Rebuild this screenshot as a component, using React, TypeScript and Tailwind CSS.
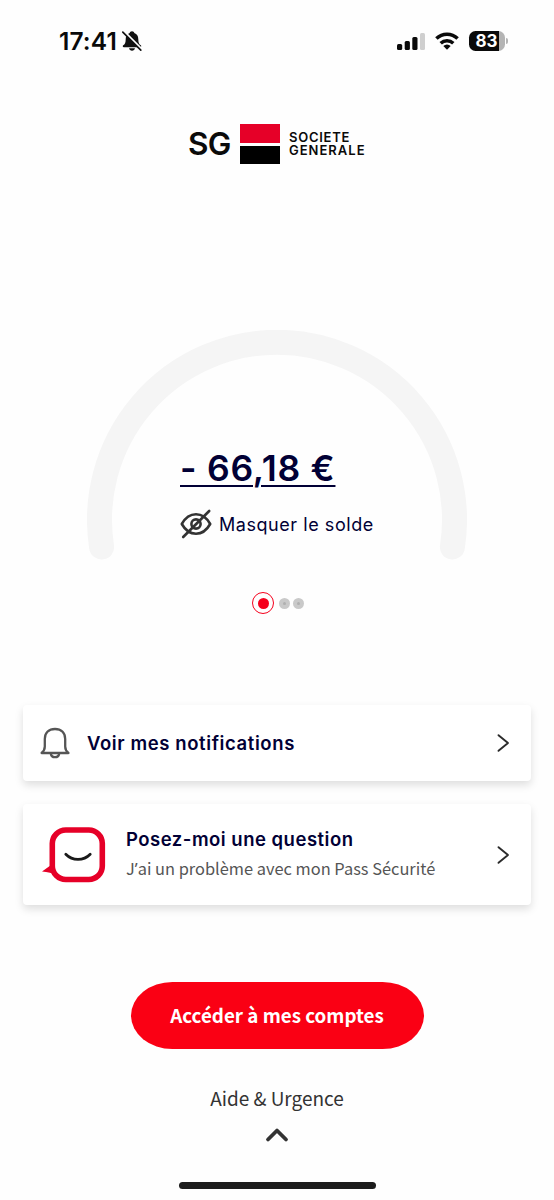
import type { ReactNode } from 'react';

// ── status bar ───────────────────────────────────────────────

function MutedBell() {
  return (
    <svg width="22" height="22" viewBox="0 0 22 22" className="ml-[4px]">
      <path
        d="M11 1.2c-1.3 0-2.1.8-2.3 1.8C6 3.900 4.700 6.200 4.700 9.200c0 3.600-.8 4.900-2.500 6.100-.8.7-.5 1.900.7 1.900h16.200c1.200 0 1.500-1.200.7-1.900-1.700-1.200-2.500-2.500-2.500-6.100 0-3-1.300-5.300-4-6.200-.2-1-1-1.800-2.300-1.800z"
        fill="#111"
      />
      <path d="M8 18.300h6c-.3 1.500-1.500 2.400-3 2.400s-2.700-.9-3-2.400z" fill="#111" />
      <path d="M2.600 1.200 21 19.600" stroke="#fff" strokeWidth="2.400" />
      <path d="M1.800 2.200 19.800 20.200" stroke="#111" strokeWidth="1.700" strokeLinecap="round" />
    </svg>
  );
}

function StatusBar() {
  return (
    <div className="flex h-[82px] items-center pl-[59px] pr-[46px]">
      <span className="text-[24.500px] font-semibold leading-none tracking-[0.100px] text-[#0a0a0a]">
        17:41
      </span>
      <MutedBell />
      <svg width="28" height="20" viewBox="0 0 28 20" className="ml-auto">
        <rect x="0" y="13" width="5.200" height="6" rx="1.500" fill="#0a0a0a" />
        <rect x="7.700" y="10" width="5.200" height="9" rx="1.500" fill="#0a0a0a" />
        <rect x="15.300" y="6" width="5.200" height="13" rx="1.500" fill="#0a0a0a" />
        <rect x="23" y="2" width="5" height="17" rx="1.500" fill="#cfcfcf" />
      </svg>
      <svg width="24" height="18" viewBox="0 0 24 18" className="ml-[10px]">
        <g fill="none" stroke="#0a0a0a" strokeWidth="3.500">
          <path d="M1.400 6.600a15.200 15.200 0 0 1 21.200 0" />
          <path d="M5.700 11.300a9.200 9.200 0 0 1 12.600 0" />
        </g>
        <path d="M12 17.800 8.300 14.100a5.300 5.300 0 0 1 7.400 0z" fill="#0a0a0a" />
      </svg>
      <div className="ml-[10px] flex items-center gap-px">
        <div className="flex h-5 w-9 items-center justify-center rounded-[6.500px] bg-[linear-gradient(90deg,#0a0a0a_82%,#b4b4b4_82%)] pr-[1px] text-[17px] font-bold leading-none text-white">
          83
        </div>
        <div className="h-[6px] w-[2px] rounded-r-full bg-[#b4b4b4]" />
      </div>
    </div>
  );
}

// ── brand ────────────────────────────────────────────────────

function Logo() {
  return (
    <div className="flex h-[42px] items-center pl-[188px] text-[#0a0a0a]">
      <span className="w-[51.500px] text-[31.500px] font-semibold leading-[42px] tracking-[-0.800px]">
        SG
      </span>
      <span className="flex w-[40px] flex-col gap-[3px]">
        <span className="h-[18.500px] bg-[#e60028]" />
        <span className="h-[18.500px] bg-black" />
      </span>
      <span className="ml-[9.500px] flex flex-col text-[13px] font-semibold leading-[13.500px]">
        <span className="tracking-[0.750px]">SOCIETE</span>
        <span className="tracking-[1px]">GENERALE</span>
      </span>
    </div>
  );
}

// ── balance gauge ────────────────────────────────────────────

function HiddenEye() {
  return (
    <svg width="32" height="30" viewBox="0 0 32 30" fill="none" stroke="#333" strokeWidth="2.600">
      <path d="M1.800 15C5.300 8.800 10.300 5.300 16 5.300S26.700 8.800 30.200 15C26.700 21.200 21.700 24.700 16 24.700S5.300 21.200 1.800 15z" strokeLinejoin="round" />
      <circle cx="16" cy="15" r="4.600" />
      <path d="M3.200 28 29.200 2" strokeLinecap="round" />
    </svg>
  );
}

function BalanceGauge() {
  return (
    <div className="mx-auto grid w-[380px]">
      <svg width="380" height="232" viewBox="0 0 380 232" className="col-start-1 row-start-1">
        <path
          d="M14.600 217A177.500 177.500 0 1 1 365.400 217"
          fill="none"
          stroke="#f5f5f5"
          strokeWidth="25"
          strokeLinecap="round"
        />
      </svg>
      <div className="col-start-1 row-start-1 pl-[93px] pt-[117px] text-[#010035]">
        <div className="h-11 whitespace-nowrap text-[35.500px] font-semibold leading-[44px] tracking-[0.750px] underline decoration-2 underline-offset-[4px]">
          - 66,18 €
        </div>
        <button className="mt-[18px] flex items-center gap-[7px] whitespace-nowrap">
          <HiddenEye />
          <span className="pt-[2px] text-[18px] leading-6 tracking-[0.550px]">Masquer le solde</span>
        </button>
      </div>
    </div>
  );
}

function Pager() {
  return (
    <div className="ml-[252px] mt-[30px] flex items-center gap-[3px]">
      <span className="mr-[2px] flex size-[22px] items-center justify-center rounded-full border-[1.500px] border-[#f5001c]">
        <span className="size-[11px] rounded-full bg-[#f5001c]" />
      </span>
      {[2, 3].map((page) => (
        <span key={page} className="flex size-[11px] items-center justify-center rounded-full bg-[#c9c9c9]">
          <span className="size-[3px] rounded-full bg-[#b0b0b0]" />
        </span>
      ))}
    </div>
  );
}

// ── cards ────────────────────────────────────────────────────

function BellIcon() {
  return (
    <svg width="30" height="32" viewBox="0 0 30 32" fill="none" stroke="#555" strokeWidth="2.300">
      <path d="M4.800 19.500V12C4.800 5.800 8.900 2 15 2s10.200 3.800 10.200 10v7.500c0 3 .9 4.600 3.200 6.500H1.600c2.300-1.900 3.200-3.500 3.200-6.500z" strokeLinejoin="round" />
      <path d="M10.800 26.500c.3 2.300 1.900 3.700 4.200 3.700s3.900-1.400 4.200-3.700" />
    </svg>
  );
}

function AssistantIcon() {
  return (
    <svg width="64" height="56" viewBox="0 0 64 56" fill="none">
      <path d="M0 44.600 10.500 37l5 11.500C10.500 45.800 5.500 45.200 0 44.600z" fill="#e60028" />
      <rect x="10.300" y="3" width="50" height="49.500" rx="13.500" stroke="#e60028" strokeWidth="5.600" fill="#fff" />
      <path d="M23.800 27.200c6.800 7 17.600 7 24.400 0" stroke="#1a1a1a" strokeWidth="2.800" strokeLinecap="round" />
    </svg>
  );
}

function Chevron() {
  return (
    <svg width="14" height="20" viewBox="0 0 14 20" fill="none" className="ml-auto">
      <path d="M2.500 2.200 12 10 2.500 17.800" stroke="#2b2b2b" strokeWidth="1.900" strokeLinecap="round" strokeLinejoin="round" />
    </svg>
  );
}

function Card({ className, children }: { className: string; children: ReactNode }) {
  return (
    <button
      className={`flex items-center whitespace-nowrap rounded-[4px] bg-white pr-[21px] text-left shadow-[0_4px_9px_rgba(0,0,0,0.130)] ${className}`}
    >
      {children}
      <Chevron />
    </button>
  );
}

export default function App() {
  return (
    <div className="flex h-[1200px] w-[554px] flex-col overflow-hidden bg-[#fefefe] font-['Inter',sans-serif]">
      <StatusBar />

      <div className="pt-[41px]">
        <Logo />
      </div>

      <div className="pt-[165px]">
        <BalanceGauge />
      </div>
      <Pager />

      <div className="mt-[91px] flex flex-col gap-[23px] px-[23px]">
        <Card className="h-[76px] pl-[17px]">
          <BellIcon />
          <span className="ml-[17px] pt-px text-[18.500px] font-semibold tracking-[0.600px] text-[#010035]">
            Voir mes notifications
          </span>
        </Card>
        <Card className="h-[101px] pl-[19px]">
          <AssistantIcon />
          <span className="ml-[20px] flex flex-col">
            <span className="text-[18.500px] font-semibold leading-[28px] tracking-[0.500px] text-[#010035]">
              Posez-moi une question
            </span>
            {/* the CJK face draws this apostrophe full width, so it comes from Noto Sans */}
            <span className="font-['Noto_Sans_CJK_SC',sans-serif] text-[16.400px] leading-[31px] text-[#555]">
              J<span className="font-['Noto_Sans',sans-serif] leading-none">’</span>ai un problème avec mon Pass Sécurité
            </span>
          </span>
        </Card>
      </div>

      <button className="mx-auto mt-[77px] h-[67px] w-[293px] shrink-0 rounded-[42px/34px] bg-[#fa0014] font-['Noto_Sans_CJK_SC',sans-serif] text-[18.800px] font-bold text-white">
        Accéder à mes comptes
      </button>

      <button className="mx-auto mt-[34px] flex flex-col items-center font-['Noto_Sans_CJK_SC',sans-serif] text-[19px] leading-[30px] text-[#333]">
        Aide &amp; Urgence
        <svg width="24" height="16" viewBox="0 0 24 16" fill="none" className="mt-[14px]">
          <path d="M3 12.500 12 3.500l9 9" stroke="#333" strokeWidth="3.800" strokeLinecap="round" strokeLinejoin="round" />
        </svg>
      </button>

      <div className="mx-auto mt-[39px] h-[7px] w-[197px] shrink-0 rounded-full bg-[#1c1c1c]" />
    </div>
  );
}
